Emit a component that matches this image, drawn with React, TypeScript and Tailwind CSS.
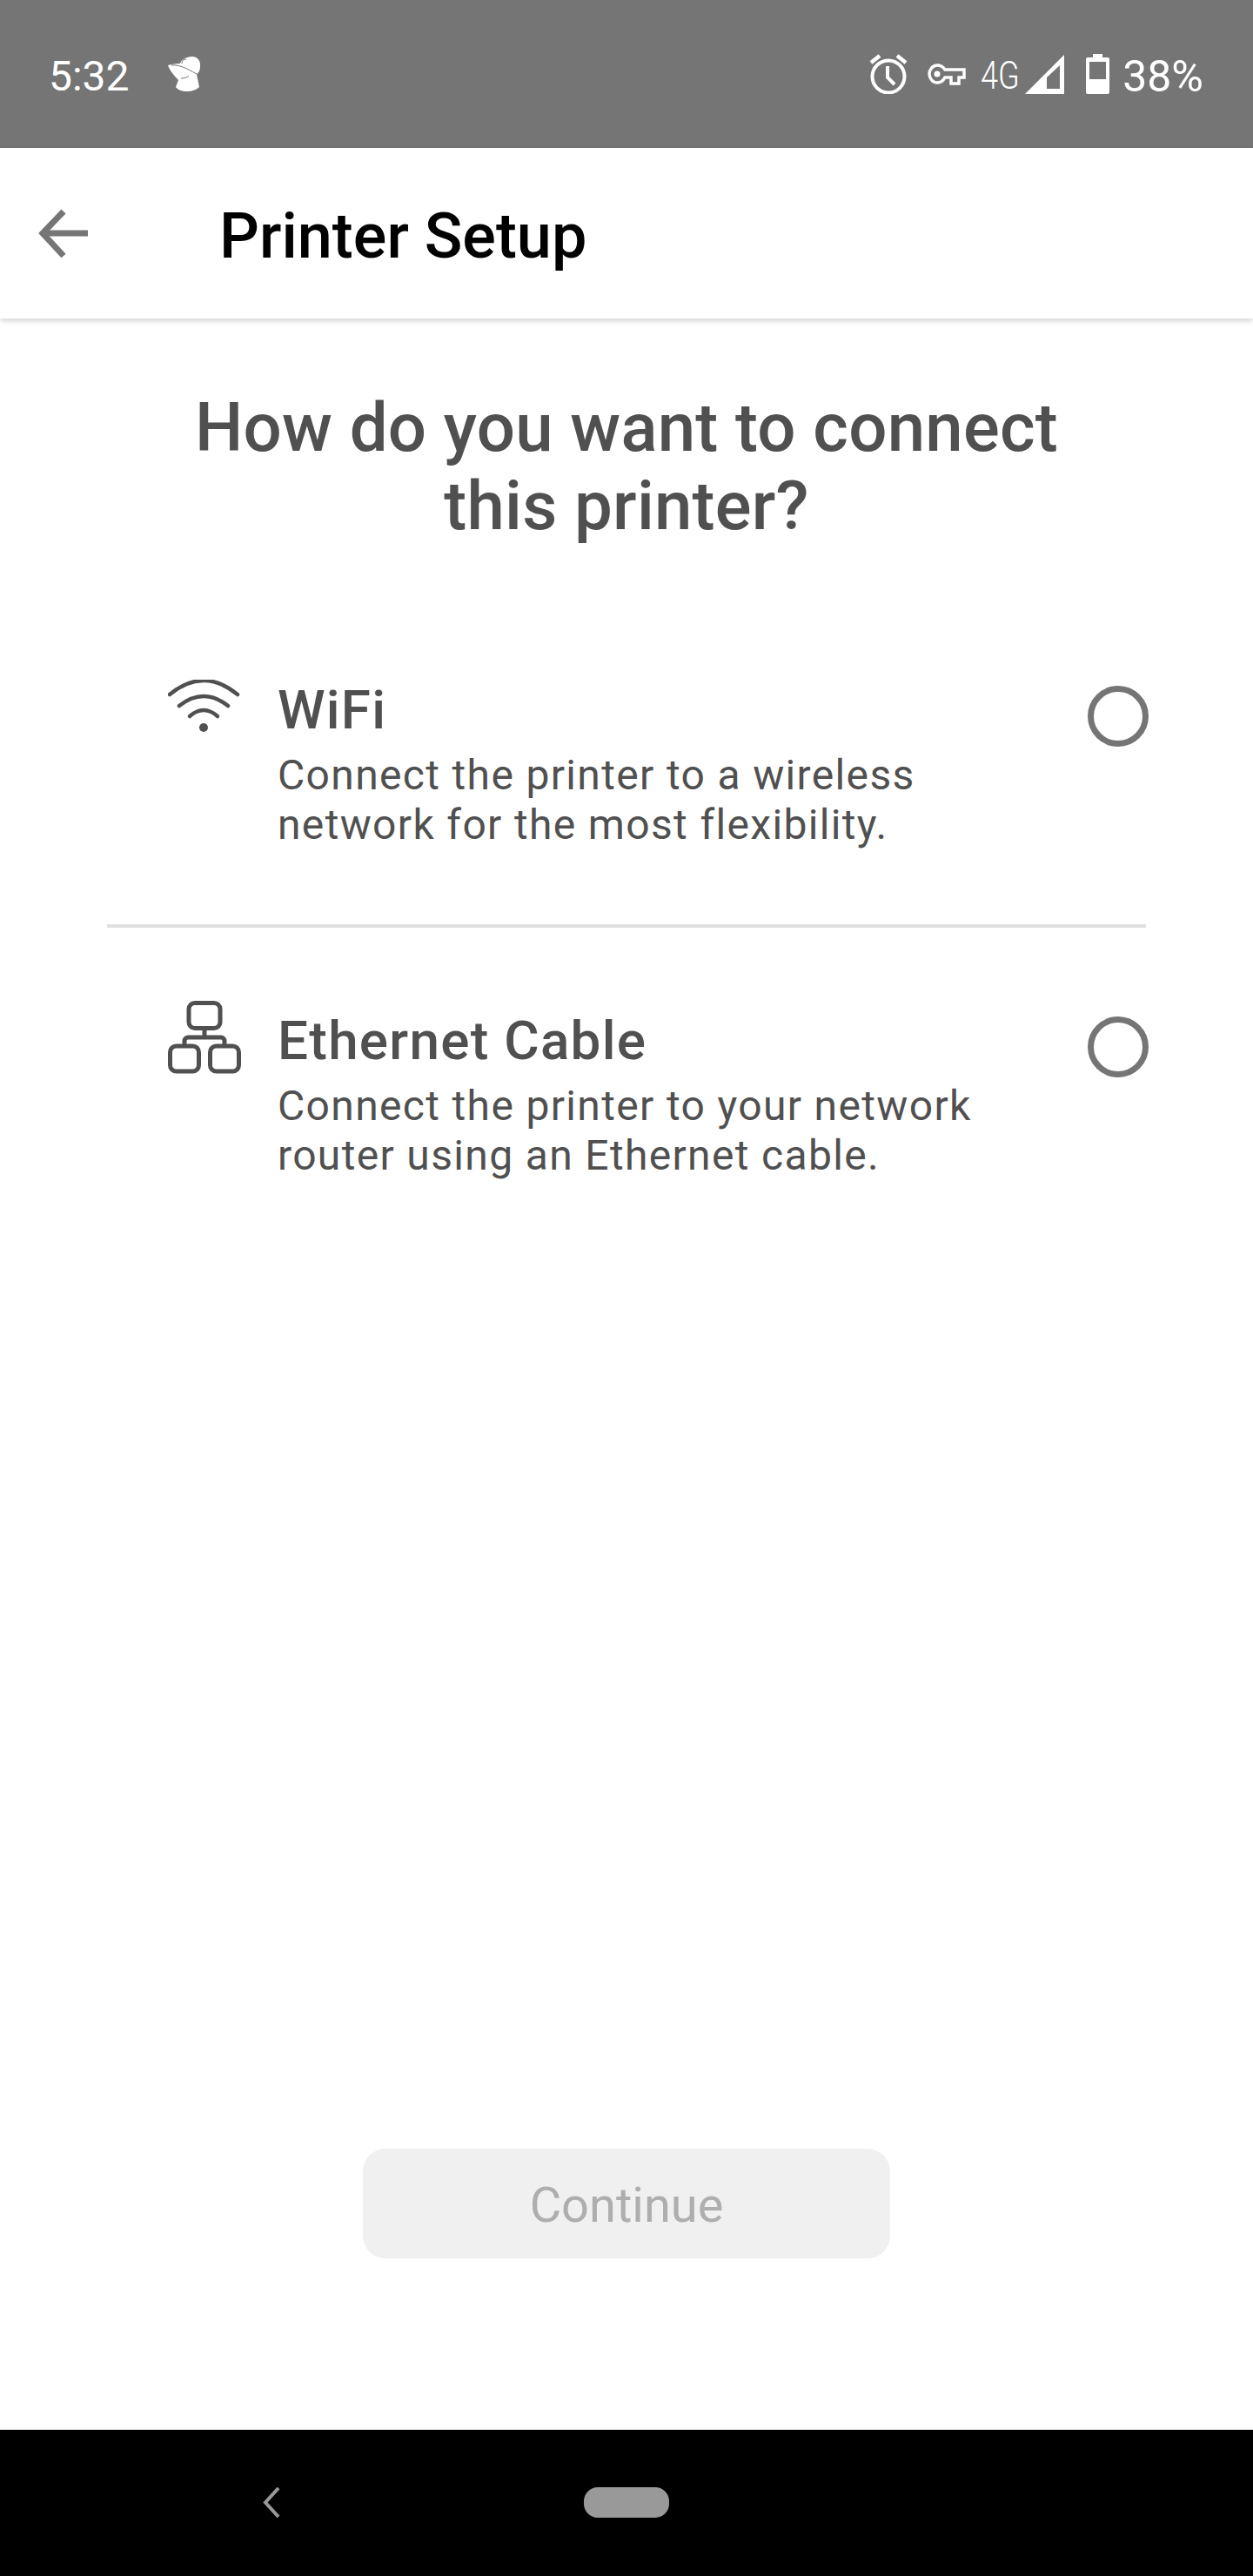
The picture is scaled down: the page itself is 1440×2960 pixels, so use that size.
import { ReactNode } from "react";

const roboto = "font-['Roboto',sans-serif]";

function Alarm() {
  return (
    <svg width="44" height="46" viewBox="0 0 44 46" fill="none" stroke="white" strokeWidth="4">
      <circle cx="22" cy="26" r="18.5" />
      <path d="M21 14v13l8 8" />
      <path d="M12 2 2 10M32 2l10 8" strokeWidth="4.5" />
    </svg>
  );
}

function KeyIcon() {
  return (
    <svg width="44" height="26" viewBox="0 0 44 26" fill="none" stroke="white" strokeWidth="3.5">
      <path d="M20 8H42V17H36V24H27V17H20C18 21 15 23 11 23 6 23 2 18 2 13 2 8 6 3 11 3 15 3 18 5 20 8z" />
      <circle cx="11" cy="13" r="3.5" fill="white" stroke="none" />
    </svg>
  );
}

function Signal() {
  return (
    <svg width="45" height="45" viewBox="0 0 45 45" fill="none">
      <path d="M45 0v45H0z" fill="white" />
      <path d="M25 26 40 12v27H25z" fill="#757575" />
    </svg>
  );
}

function Battery() {
  return (
    <svg width="27" height="46" viewBox="0 0 27 46" fill="none">
      <path d="M8 0h11v4h6a2 2 0 0 1 2 2v38a2 2 0 0 1-2 2H2a2 2 0 0 1-2-2V6a2 2 0 0 1 2-2h6z" fill="white" />
      <rect x="4" y="9" width="19" height="20" fill="#757575" />
    </svg>
  );
}

// the little hat lady next to the clock
function HatLady() {
  return (
    <svg width="60" height="60" viewBox="0 0 60 60" fill="none">
      <path d="M12 20C16 19 20 18 26 18 27 14 33 10 40 10 46 10 50 15 49 22 49 26 47 29 45 30L48 45C44 49 38 50 34 50 28 50 23 48 21 45L24 37C20 33 14 26 12 20z" fill="white" />
      <path d="M16 20C24 19 33 23 45 30" stroke="#757575" strokeWidth="1" />
      <path d="M27 35C31 35 34 34 36 32" stroke="#757575" strokeWidth="1" />
      <path d="M28 18C28 15 30 13 33 13" stroke="#757575" strokeWidth="1" />
    </svg>
  );
}

function StatusBar() {
  return (
    <div className={`flex h-[170px] shrink-0 items-center bg-[#757575] pl-[56px] pr-[57px] text-white ${roboto}`}>
      <span className="mt-[5px] text-[48px] leading-none">5:32</span>
      <span className="ml-[32px] flex">
        <HatLady />
      </span>
      <div className="ml-auto flex items-center">
        <Alarm />
        <span className="ml-[23px] flex">
          <KeyIcon />
        </span>
        <span className="ml-[17px] mt-[3px] w-[43px] origin-left scale-x-[0.82] text-[44px] font-light leading-none">4G</span>
        <span className="ml-[8px] flex">
          <Signal />
        </span>
        <span className="ml-[25px] flex">
          <Battery />
        </span>
        <span className="ml-[15px] mt-[5px] text-[50px] leading-none">38%</span>
      </div>
    </div>
  );
}

function WifiIcon() {
  return (
    <svg width="84" height="62" viewBox="0 0 84 62" fill="none" stroke="#505050" strokeWidth="4.5" strokeLinecap="round">
      <path d="M2 17Q41-15 80 17" />
      <path d="M13 30Q41 8 69 30" />
      <path d="M25 42Q41 28 57 42" />
      <circle cx="41" cy="55" r="5" fill="#505050" stroke="none" />
    </svg>
  );
}

function NetworkIcon() {
  return (
    <svg width="84" height="84" viewBox="0 0 84 84" fill="none" stroke="#505050" strokeWidth="5">
      <rect x="24" y="2.5" width="36" height="29" rx="7" />
      <rect x="2.5" y="52" width="33" height="29" rx="7" />
      <rect x="48.5" y="52" width="33" height="29" rx="7" />
      <path d="M42 31v11M19 52v-6a4 4 0 0 1 4-4h38a4 4 0 0 1 4 4v6" />
    </svg>
  );
}

function Radio() {
  return <div className="h-[70px] w-[70px] shrink-0 rounded-full border-[7px] border-[#757575]" />;
}

function Option({ icon, title, lines, iconTop, className }: { icon: ReactNode; title: string; lines: string[]; iconTop: string; className?: string }) {
  return (
    <div className={`flex items-start pl-[70px] ${className ?? ""}`}>
      <div className={`flex w-[126px] shrink-0 ${iconTop}`}>{icon}</div>
      <div className="flex-1">
        <div className="text-[62px] font-medium leading-[70px] tracking-[0.02em] text-[#505050]">{title}</div>
        <div className="mt-[11px]">
          {lines.map((l) => (
            <div key={l} className="text-[48px] leading-[57px] tracking-[0.028em] text-[#505050]">
              {l}
            </div>
          ))}
        </div>
      </div>
      <div className="-mr-[3px] mt-[7px]">
        <Radio />
      </div>
    </div>
  );
}

export default function App() {
  return (
    <div className={`flex h-[2960px] w-[1440px] flex-col bg-white ${roboto}`}>
      <StatusBar />
      <div className="relative z-10 flex h-[196px] shrink-0 items-center bg-white shadow-[0_3px_6px_rgba(0,0,0,0.16)]">
        <svg className="ml-[44px] mt-[2px]" width="58" height="58" viewBox="0 0 58 58" fill="none" stroke="#757575" strokeWidth="7">
          <path d="M57 28H5" />
          <path d="M29 3 5 28l24 26" />
        </svg>
        <h1 className="ml-[150px] mt-[7px] text-[72px] font-medium leading-none text-black">Printer Setup</h1>
      </div>
      <main className="flex flex-1 flex-col">
        <h2 className="mt-[81px] text-center text-[78px] font-medium leading-[90px] tracking-[0.2px] text-[#505050]">
          How do you want to connect
          <br />
          this printer?
        </h2>
        <div className="mx-[123px] mt-[154px]">
          <div className="border-b-[4px] border-[#e0e0e0] pb-[86px]">
            <Option icon={<WifiIcon />} title="WiFi" lines={["Connect the printer to a wireless", "network for the most flexibility."]} iconTop="mt-0" />
          </div>
          <Option className="mt-[95px]" icon={<NetworkIcon />} title="Ethernet Cable" lines={["Connect the printer to your network", "router using an Ethernet cable."]} iconTop="-mt-[11px]" />
        </div>
        <div className="mt-auto flex justify-center pb-[197px]">
          <button className="h-[126px] w-[606px] rounded-[26px] bg-[#f0f0f0] pt-[4px] text-[56px] text-[#aeaeae]">Continue</button>
        </div>
      </main>
      <div className="flex h-[168px] shrink-0 items-center justify-center bg-black pb-[1px]">
        <div className="relative h-[35px] w-[98px] rounded-[16px] bg-[#999999]">
          <svg className="absolute left-[-369px] top-0" width="20" height="35" viewBox="0 0 20 35" fill="none" stroke="#999999" strokeWidth="4">
            <path d="M18 1 3 17.5 18 34" />
          </svg>
        </div>
      </div>
    </div>
  );
}
